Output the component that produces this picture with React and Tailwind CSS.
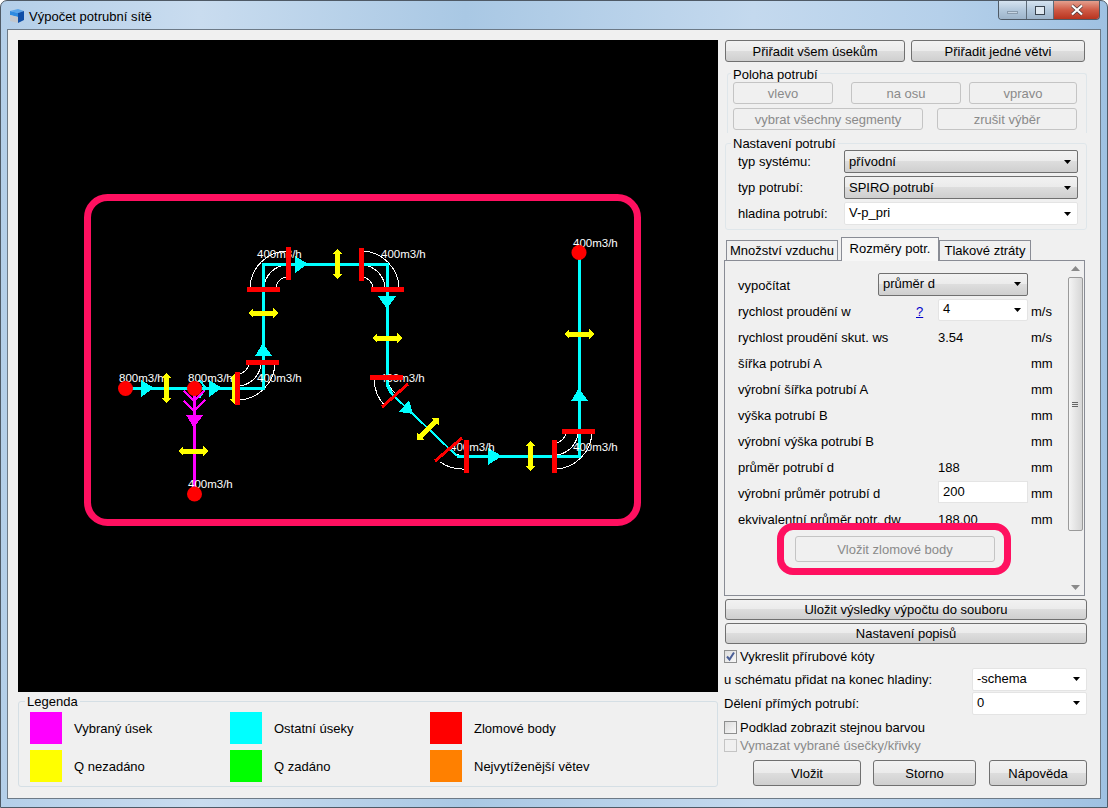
const PINK = "#ff1060";

const Caret = ({ disabled }) => (
    <svg width="7" height="4" viewBox="0 0 7 4" className="shrink-0">
        <path d="M0 0h7L3.5 4z" fill={disabled ? "#a0a0a0" : "#000"} />
    </svg>
);

const WinButton = ({ children, className = "", disabled }) => (
    <div
        className={`flex items-center justify-center rounded-[3px] border ${
            disabled
                ? "border-[#c4c4c4] bg-[#f0f0f0] text-[#8a8a8a]"
                : "border-[#707070] bg-[linear-gradient(#f2f2f2,#ebebeb_48%,#dddddd_50%,#cfcfcf)] text-black"
        } ${className}`}
    >
        {children}
    </div>
);

const Combo = ({ value, className = "", flat }) => (
    <div
        className={`flex items-center justify-between rounded-[2px] pl-1 pr-[6px] ${
            flat
                ? "bg-white border border-[#e4e4e4]"
                : "border border-[#707070] bg-[linear-gradient(#f2f2f2,#ebebeb_48%,#dddddd_50%,#cfcfcf)]"
        } ${className}`}
    >
        <span className={flat ? "-mt-[2px]" : "-mt-[1px]"}>{value}</span>
        <Caret />
    </div>
);

const Check = ({ label, checked, disabled, className = "" }) => (
    <div className={`flex items-center gap-[3px] ${disabled ? "text-[#8a8a8a]" : ""} ${className}`}>
        <div className={`flex h-[13px] w-[13px] items-center justify-center border ${disabled ? "border-[#c4c4c4]" : "border-[#8e8f8f] bg-[linear-gradient(135deg,#dcdcdc,#f8f8f8)]"}`}>
            {checked && (
                <svg width="11" height="11" viewBox="0 0 11 11">
                    <path d="M2 5.5l2.5 3L9 1.5" fill="none" stroke="#4a5f97" strokeWidth="2" />
                </svg>
            )}
        </div>
        <span>{label}</span>
    </div>
);

const Legend = ({ color, label, className }) => (
    <div className={`flex items-center ${className}`}>
        <div className="h-8 w-8 shrink-0" style={{ backgroundColor: color }}></div>
        <span className="ml-3">{label}</span>
    </div>
);

const PaneRow = ({ label, labelWidth = "w-[200px]", children, unit }) => (
    <div className="flex h-[26px] items-center">
        <span className={`shrink-0 ${labelWidth}`}>{label}</span>
        {children}
        {unit && <span className="absolute left-[306px]">{unit}</span>}
    </div>
);

const DoubleArrow = ({ x, y, rotate = 0 }) => (
    <polygon
        transform={`translate(${x} ${y}) rotate(${rotate})`}
        points="-15,0 -10,-5 -10,-2.5 10,-2.5 10,-5 15,0 10,5 10,2.5 -10,2.5 -10,5"
        fill="#ffff00"
    />
);

const Arc = ({ d }) => <path d={d} fill="none" stroke="#fff" strokeWidth="1" />;

const quarter = (cx, cy, r, sx, sy, sweep) =>
    `M${cx + sx * r} ${cy}A${r} ${r} 0 0 ${sweep} ${cx} ${cy + sy * r}`;

const Bar = ({ x1, y1, x2, y2, width = 5 }) => (
    <line x1={x1} y1={y1} x2={x2} y2={y2} stroke="#ff0000" strokeWidth={width} />
);

const flowLabels = [
    [119, 382, "800m3/h"],
    [188, 382, "800m3/h"],
    [257, 382, "400m3/h"],
    [257, 258, "400m3/h"],
    [381, 258, "400m3/h"],
    [380, 382, "400m3/h"],
    [450, 451, "400m3/h"],
    [573, 451, "400m3/h"],
    [573, 247, "400m3/h"],
    [188, 488, "400m3/h"],
];

const Schema = () => (
    <svg viewBox="18 40 700 652" width="700" height="652" className="block" shapeRendering="crispEdges">
        <rect x="87.5" y="197.5" width="550" height="325" rx="20" fill="none" stroke={PINK} strokeWidth="7" shapeRendering="auto" />

        {[12, 24, 38].map((r) => (
            <g key={r}>
                <Arc d={quarter(237, 362, r, 1, 1, 1)} />
                <Arc d={quarter(288, 289, r, -1, -1, 1)} />
                <Arc d={quarter(361, 289, r, 1, -1, 0)} />
                <Arc d={quarter(554, 431, r, 1, 1, 1)} />
            </g>
        ))}
        <Arc d="M374 380A41 41 0 0 0 385 406" />
        <Arc d="M387 380A28 28 0 0 0 395 393" />
        <Arc d="M440 462A39 39 0 0 0 464 469" />
        <Arc d="M452 452A26 26 0 0 0 464 456" />

        <polyline points="125,388 263,388 263,264 387,264 387,385 392,394" fill="none" stroke="#00ffff" strokeWidth="3" />
        <line x1="392" y1="394" x2="457" y2="456" stroke="#00ffff" strokeWidth="2" />
        <polyline points="457,456 579,456 579,252" fill="none" stroke="#00ffff" strokeWidth="3" />
        <polyline points="199,380 206,388 199,398" fill="none" stroke="#00ffff" strokeWidth="2" />
        <line x1="194" y1="388" x2="194" y2="494" stroke="#ff00ff" strokeWidth="3" />
        <polyline points="184,391 194,401 204,391" fill="none" stroke="#ff00ff" strokeWidth="2" />
        <polyline points="184,401 194,411 205,400" fill="none" stroke="#ff00ff" strokeWidth="2" />

        <polygon points="141,380 141,397 154,388" fill="#00ffff" />
        <polygon points="209,380 209,397 222,388" fill="#00ffff" />
        <polygon points="263,343 255,356 272,356" fill="#00ffff" />
        <polygon points="295,256 295,273 308,264" fill="#00ffff" />
        <polygon points="378,296 396,296 387,309" fill="#00ffff" />
        <polygon points="409,400 399,412 413,414" fill="#00ffff" />
        <polygon points="488,448 488,465 502,456" fill="#00ffff" />
        <polygon points="579,388 571,401 588,401" fill="#00ffff" />
        <polygon points="186,415 203,415 194,428" fill="#ff00ff" />

        <DoubleArrow x={166} y={388} rotate={90} />
        <DoubleArrow x={193} y={451} />
        <DoubleArrow x={263} y={313} />
        <DoubleArrow x={337} y={264} rotate={90} />
        <DoubleArrow x={387} y={338} />
        <DoubleArrow x={530} y={456} rotate={90} />
        <DoubleArrow x={579} y={334} />
        <DoubleArrow x={428} y={429} rotate={-45} />
        <DoubleArrow x={234} y={389} rotate={90} />

        {flowLabels.map(([x, y, label]) => (
            <text key={`${x}-${y}`} x={x} y={y} fill="#fff" fontSize="11.5" fontFamily="'Liberation Sans', sans-serif">
                {label}
            </text>
        ))}

        <Bar x1={237} y1={372} x2={237} y2={405} />
        <Bar x1={246} y1={362} x2={279} y2={362} />
        <Bar x1={247} y1={289} x2={280} y2={289} />
        <Bar x1={288} y1={247} x2={288} y2={280} />
        <Bar x1={361} y1={248} x2={361} y2={281} />
        <Bar x1={371} y1={289} x2={404} y2={289} />
        <Bar x1={370} y1={377} x2={403} y2={377} />
        <Bar x1={382} y1={407} x2={408} y2={384} width={3} />
        <Bar x1={435} y1={461} x2={462} y2={438} width={3} />
        <Bar x1={466} y1={440} x2={466} y2={473} />
        <Bar x1={554} y1={440} x2={554} y2={473} />
        <Bar x1={562} y1={431} x2={595} y2={431} />

        <g shapeRendering="auto">
            <circle cx="125.5" cy="388.5" r="7.5" fill="#ff0000" />
            <circle cx="194.5" cy="388.5" r="7.5" fill="#ff0000" />
            <circle cx="194.5" cy="494" r="7.5" fill="#ff0000" />
            <circle cx="579" cy="252.5" r="7.5" fill="#ff0000" />
        </g>
    </svg>
);

const App = () => {
    return (
        <div className="flex h-[808px] w-[1108px] flex-col overflow-hidden rounded-t-[7px] border border-[#4f5a66] bg-[linear-gradient(90deg,#b4cfe9,#c9dcef_18%,#a9c8e4_42%,#c4d9ee_68%,#b5d0ea_85%,#9fc1e2)] font-['Liberation_Sans',Arial,sans-serif] text-[13px] leading-none text-black">
            <div className="flex h-[28px] shrink-0 items-start">
                <svg width="16" height="16" viewBox="0 0 16 16" className="ml-[8px] mt-[7px]">
                    <path d="M1 3l8-2 6 2-6 2z" fill="#5aa5ea" />
                    <path d="M1 3l8 2v4l-8-2z" fill="#2f8be0" />
                    <path d="M1 7l8 2v6l-8-2z" fill="#c3c8ce" />
                    <path d="M9 5l6-2v9l-6 3z" fill="#0f4fa8" />
                </svg>
                <span className="ml-[4px] mt-[9px]">Výpočet potrubní sítě</span>
                <div className="ml-auto mr-[7px] flex h-[19px] overflow-hidden rounded-b-[4px] border border-t-0 border-[#4f5a66]">
                    <div className="flex w-[28px] items-end justify-center border-r border-[#5d6b78] bg-[linear-gradient(#d5e3f0,#b3c8dc_50%,#9db4ca)] pb-[5px]">
                        <div className="h-[3px] w-[11px] border border-[#8a9cae] bg-[#c8d6e4]"></div>
                    </div>
                    <div className="flex w-[27px] items-center justify-center border-r border-[#5d6b78] bg-[linear-gradient(#d5e3f0,#b3c8dc_50%,#9db4ca)]">
                        <div className="h-[9px] w-[10px] border border-[#39434e] bg-[#dfe8f0] p-[1px]"></div>
                    </div>
                    <div className="flex w-[45px] items-center justify-center bg-[linear-gradient(#e4a08e,#cf5a45_50%,#b8341f)]">
                        <svg width="14" height="12" viewBox="0 0 14 12">
                            <path d="M2 1.5l10 9M12 1.5l-10 9" stroke="#4a3a3a" strokeWidth="3.6" />
                            <path d="M2 1.5l10 9M12 1.5l-10 9" stroke="#fff" strokeWidth="2.2" />
                        </svg>
                    </div>
                </div>
            </div>

            <div className="mx-[6px] flex h-[770px] shrink-0 border border-[#6d7a87] bg-[#f0f0f0] pl-[10px] pt-[10px]">
                <div className="w-[700px] shrink-0">
                    <div className="h-[652px] bg-black">
                        <Schema />
                    </div>
                    <div className="relative mt-[9px] flex h-[86px] flex-col gap-[6px] rounded-[3px] border border-[#d5dfe5] pl-[11px] pt-[10px]">
                        <span className="absolute -top-[7px] left-[6px] bg-[#f0f0f0] px-[2px]">Legenda</span>
                        <div className="flex">
                            <Legend color="#ff00ff" label="Vybraný úsek" className="w-[200px]" />
                            <Legend color="#00ffff" label="Ostatní úseky" className="w-[200px]" />
                            <Legend color="#ff0000" label="Zlomové body" className="w-[200px]" />
                        </div>
                        <div className="flex">
                            <Legend color="#ffff00" label="Q nezadáno" className="w-[200px]" />
                            <Legend color="#00ff00" label="Q zadáno" className="w-[200px]" />
                            <Legend color="#ff8000" label="Nejvytíženější větev" className="w-[200px]" />
                        </div>
                    </div>
                </div>

                <div className="ml-[6px] w-[364px] shrink-0">
                    <div className="flex gap-[6px] pl-[1px]">
                        <WinButton className="h-[22px] w-[180px]">Přiřadit všem úsekům</WinButton>
                        <WinButton className="h-[22px] w-[174px]">Přiřadit jedné větvi</WinButton>
                    </div>

                    <div className="relative ml-[3px] mt-[11px] h-[60px] w-[360px] rounded-t-[3px] border border-b-0 border-[#dfe6ea] pl-[5px] pt-[8px]">
                        <span className="absolute -top-[6px] left-[3px] bg-[#f0f0f0] px-[2px]">Poloha potrubí</span>
                        <div className="flex">
                            <WinButton disabled className="h-[22px] w-[100px]">vlevo</WinButton>
                            <WinButton disabled className="ml-[18px] h-[22px] w-[110px]">na osu</WinButton>
                            <WinButton disabled className="ml-[8px] h-[22px] w-[108px]">vpravo</WinButton>
                        </div>
                        <div className="mt-[4px] flex">
                            <WinButton disabled className="h-[22px] w-[190px]">vybrat všechny segmenty</WinButton>
                            <WinButton disabled className="ml-[14px] h-[22px] w-[140px]">zrušit výběr</WinButton>
                        </div>
                    </div>

                    <div className="relative ml-[1px] mt-[10px] h-[87px] w-[362px] rounded-[3px] border border-[#dfe6ea] pl-[12px] pt-[6px]">
                        <span className="absolute -top-[7px] left-[5px] bg-[#f0f0f0] px-[2px]">Nastavení potrubí</span>
                        <div className="flex h-[23px] items-center">
                            <span className="w-[106px]">typ systému:</span>
                            <Combo value="přívodní" className="h-[23px] w-[234px]" />
                        </div>
                        <div className="mt-[3px] flex h-[23px] items-center">
                            <span className="w-[106px]">typ potrubí:</span>
                            <Combo value="SPIRO potrubí" className="h-[23px] w-[234px]" />
                        </div>
                        <div className="mt-[3px] flex h-[23px] items-center">
                            <span className="w-[106px]">hladina potrubí:</span>
                            <Combo flat value="V-p_pri" className="h-[23px] w-[234px]" />
                        </div>
                    </div>

                    <div className="mt-[7px] flex h-[23px] items-end pl-[2px]">
                        <div className="flex h-[20px] w-[112px] items-center justify-center border border-b-0 border-[#898c95] bg-[#f0f0f0]">Množství vzduchu</div>
                        <div className="z-10 -mb-[1px] ml-[3px] flex h-[24px] w-[98px] items-start justify-center border border-b-0 border-[#898c95] bg-[#f6f6f6] pt-[4px]">Rozměry potr.</div>
                        <div className="flex h-[20px] w-[92px] items-center justify-center border border-b-0 border-[#898c95] bg-[#f0f0f0]">Tlakové ztráty</div>
                    </div>

                    <div className="flex h-[336px] w-[361px] border border-[#898c95]">
                        <div className="relative flex-1 pl-[13px] pt-[11px]">
                            <PaneRow label="vypočítat" labelWidth="w-[140px]">
                                <Combo value="průměr d" className="-mt-[2px] h-[23px] w-[150px]" />
                            </PaneRow>
                            <PaneRow label="rychlost proudění w" labelWidth="w-[178px]" unit="m/s">
                                <span className="w-[22px] text-[#0000cc] underline">?</span>
                                <Combo flat value="4" className="-mt-[3px] h-[22px] w-[90px]" />
                            </PaneRow>
                            <PaneRow label="rychlost proudění skut. ws" unit="m/s"><span>3.54</span></PaneRow>
                            <PaneRow label="šířka potrubí A" unit="mm" />
                            <PaneRow label="výrobní šířka potrubí A" unit="mm" />
                            <PaneRow label="výška potrubí B" unit="mm" />
                            <PaneRow label="výrobní výška potrubí B" unit="mm" />
                            <PaneRow label="průměr potrubí d" unit="mm"><span>188</span></PaneRow>
                            <PaneRow label="výrobní průměr potrubí d" unit="mm">
                                <div className="-mt-[3px] flex h-[22px] w-[90px] items-center border border-[#e4e4e4] bg-white pl-1">200</div>
                            </PaneRow>
                            <PaneRow label="ekvivalentní průměr potr. dw" unit="mm"><span>188.00</span></PaneRow>

                            <WinButton disabled className="ml-[57px] mt-[4px] h-[26px] w-[200px]">Vložit zlomové body</WinButton>
                            <div className="absolute left-[52px] top-[262px] h-[52px] w-[234px] rounded-[16px] border-[7px] border-[#ff1060]"></div>
                        </div>

                        <div className="flex w-[18px] shrink-0 flex-col items-center bg-[#f0f0f0]">
                            <svg width="9" height="5" viewBox="0 0 9 5" className="mt-[5px]"><path d="M0 5L4.5 0 9 5z" fill="#8a8a8a" /></svg>
                            <div className="mt-[6px] flex h-[254px] w-[15px] flex-col items-center justify-center gap-[1px] rounded-[2px] border border-[#9a9a9a] bg-[linear-gradient(90deg,#f4f4f4,#d6d6d6)]">
                                <div className="h-[1px] w-[6px] bg-[#666]"></div>
                                <div className="h-[1px] w-[6px] bg-[#666]"></div>
                                <div className="h-[1px] w-[6px] bg-[#666]"></div>
                            </div>
                            <svg width="9" height="5" viewBox="0 0 9 5" className="mt-auto mb-[5px]"><path d="M0 0L4.5 5 9 0z" fill="#8a8a8a" /></svg>
                        </div>
                    </div>

                    <WinButton className="ml-[1px] mt-[3px] h-[21px] w-[362px]">Uložit výsledky výpočtu do souboru</WinButton>
                    <WinButton className="ml-[1px] mt-[3px] h-[21px] w-[362px]">Nastavení popisů</WinButton>

                    <Check checked label="Vykreslit přírubové kóty" className="mt-[6px] h-[13px]" />

                    <div className="mt-[4px] flex h-[24px] items-center">
                        <span className="w-[248px]">u schématu přidat na konec hladiny:</span>
                        <Combo flat value="-schema" className="h-[23px] w-[115px]" />
                    </div>
                    <div className="flex h-[24px] items-center">
                        <span className="w-[248px]">Dělení přímých potrubí:</span>
                        <Combo flat value="0" className="h-[23px] w-[115px]" />
                    </div>

                    <Check label="Podklad zobrazit stejnou barvou" className="mt-[6px] h-[13px]" />
                    <Check disabled label="Vymazat vybrané úsečky/křivky" className="mt-[5px] h-[13px]" />

                    <div className="mt-[8px] flex pl-[29px]">
                        <WinButton className="h-[26px] w-[108px]">Vložit</WinButton>
                        <WinButton className="ml-[12px] h-[26px] w-[103px]">Storno</WinButton>
                        <WinButton className="ml-[13px] h-[26px] w-[98px]">Nápověda</WinButton>
                    </div>
                </div>
            </div>
        </div>
    );
};

export default App;
